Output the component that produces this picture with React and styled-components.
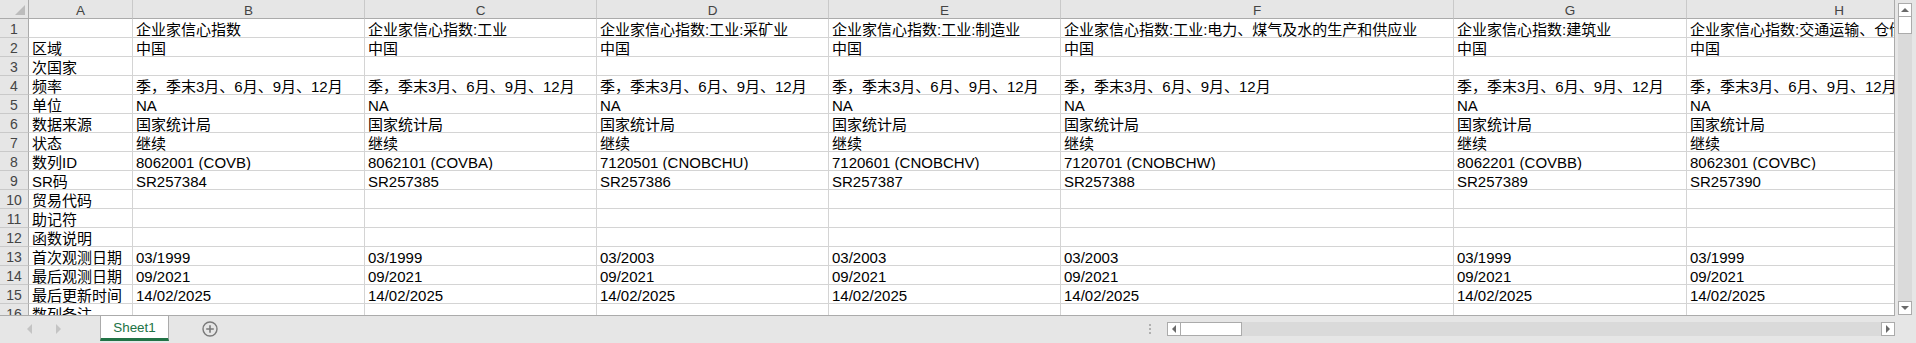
import React from "react";
import styled, { createGlobalStyle, css } from "styled-components";

const GlobalStyle = createGlobalStyle`
  body {
    margin: 0;
    overflow: hidden;
    background: #e6e6e6;
  }
`;

const columns = [
  { key: "A", w: 104 },
  { key: "B", w: 232 },
  { key: "C", w: 232 },
  { key: "D", w: 232 },
  { key: "E", w: 232 },
  { key: "F", w: 393 },
  { key: "G", w: 233 },
  { key: "H", w: 305 },
];

const all = (v) => Array(7).fill(v);

const rows = [
  [
    "",
    [
      "企业家信心指数",
      "企业家信心指数:工业",
      "企业家信心指数:工业:采矿业",
      "企业家信心指数:工业:制造业",
      "企业家信心指数:工业:电力、煤气及水的生产和供应业",
      "企业家信心指数:建筑业",
      "企业家信心指数:交通运输、仓储和邮政业",
    ],
  ],
  ["区域", all("中国")],
  ["次国家", all("")],
  ["频率", all("季，季末3月、6月、9月、12月")],
  ["单位", all("NA")],
  ["数据来源", all("国家统计局")],
  ["状态", all("继续")],
  [
    "数列ID",
    [
      "8062001 (COVB)",
      "8062101 (COVBA)",
      "7120501 (CNOBCHU)",
      "7120601 (CNOBCHV)",
      "7120701 (CNOBCHW)",
      "8062201 (COVBB)",
      "8062301 (COVBC)",
    ],
  ],
  ["SR码", ["SR257384", "SR257385", "SR257386", "SR257387", "SR257388", "SR257389", "SR257390"]],
  ["贸易代码", all("")],
  ["助记符", all("")],
  ["函数说明", all("")],
  ["首次观测日期", ["03/1999", "03/1999", "03/2003", "03/2003", "03/2003", "03/1999", "03/1999"]],
  ["最后观测日期", all("09/2021")],
  ["最后更新时间", all("14/02/2025")],
  ["数列备注", all("")],
];

function App() {
  return (
    <>
      <GlobalStyle />
      <Window>
        <Main>
          <Sheet>
            <Corner>
              <svg width="10" height="10" viewBox="0 0 10 10">
                <polygon points="10,0 10,10 0,10" fill="#bcbcbc" />
              </svg>
            </Corner>
            {columns.map((c) => (
              <ColHead key={c.key}>{c.key}</ColHead>
            ))}
            {rows.map(([label, values], i) => (
              <React.Fragment key={i}>
                <RowHead>{i + 1}</RowHead>
                <Cell>{label}</Cell>
                {values.map((v, j) => (
                  <Cell key={j}>{v}</Cell>
                ))}
              </React.Fragment>
            ))}
          </Sheet>
          <VScroll>
            <ScrollBtn>
              <Arrow $dir="up" />
            </ScrollBtn>
            <VThumb />
            <VTrack />
            <ScrollBtn>
              <Arrow $dir="down" />
            </ScrollBtn>
          </VScroll>
        </Main>
        <TabBar>
          <NavArrows>
            <NavArrow $dir="left" />
            <NavArrow $dir="right" />
          </NavArrows>
          <SheetTab>Sheet1</SheetTab>
          <AddSheet>
            <svg width="16" height="16" viewBox="0 0 16 16">
              <circle cx="8" cy="8" r="7" fill="none" stroke="#7a7a7a" strokeWidth="1.4" />
              <path d="M8 4.2v7.6M4.2 8h7.6" stroke="#7a7a7a" strokeWidth="1.6" />
            </svg>
          </AddSheet>
          <Spacer />
          <Splitter>
            <span />
            <span />
            <span />
          </Splitter>
          <HScroll>
            <ScrollBtn>
              <Arrow $dir="left" />
            </ScrollBtn>
            <HThumb />
            <HTrack />
            <ScrollBtn>
              <Arrow $dir="right" />
            </ScrollBtn>
          </HScroll>
        </TabBar>
      </Window>
    </>
  );
}

export default App;

const Window = styled.div`
  width: 1916px;
  height: 343px;
  display: flex;
  flex-direction: column;
  background: #e6e6e6;
  font-family: "Liberation Sans", "Noto Sans CJK SC", sans-serif;
  overflow: hidden;
`;

const Main = styled.div`
  display: flex;
  height: 316px;
  flex: none;
`;

const Sheet = styled.div`
  width: 1895px;
  height: 316px;
  flex: none;
  box-sizing: border-box;
  border-right: 1px solid #ababab;
  border-bottom: 1px solid #ababab;
  background: #fff;
  overflow: hidden;
  display: grid;
  grid-template-columns: 29px ${columns.map((c) => `${c.w}px`).join(" ")};
  grid-auto-rows: 19px;
  align-content: start;
`;

const cellBase = css`
  box-sizing: border-box;
  height: 19px;
  white-space: nowrap;
  overflow: hidden;
`;

const Corner = styled.div`
  ${cellBase};
  background: #e6e6e6;
  border-right: 1px solid #ababab;
  border-bottom: 1px solid #ababab;
  display: flex;
  justify-content: flex-end;
  align-items: flex-end;
  padding: 0 3px 3px 0;
`;

const ColHead = styled.div`
  ${cellBase};
  background: #e6e6e6;
  border-right: 1px solid #c9c9c9;
  border-bottom: 1px solid #ababab;
  color: #444;
  font-size: 13.5px;
  line-height: 17px;
  padding-top: 2px;
  text-align: center;
`;

const RowHead = styled.div`
  ${cellBase};
  background: #e6e6e6;
  border-right: 1px solid #ababab;
  border-bottom: 1px solid #c9c9c9;
  color: #444;
  font-size: 14px;
  line-height: 15px;
  padding-top: 3px;
  text-align: center;
`;

const Cell = styled.div`
  ${cellBase};
  border-right: 1px solid #d4d4d4;
  border-bottom: 1px solid #d4d4d4;
  color: #000;
  font-size: 15px;
  line-height: 15px;
  padding: 3px 0 0 3px;
`;

const VScroll = styled.div`
  width: 21px;
  height: 316px;
  flex: none;
  box-sizing: border-box;
  padding: 3px 4px 1px 3px;
  display: flex;
  flex-direction: column;
`;

const ScrollBtn = styled.div`
  width: 14px;
  height: 14px;
  flex: none;
  box-sizing: border-box;
  background: #fff;
  border: 1px solid #ababab;
  display: flex;
  align-items: center;
  justify-content: center;
`;

const arrowShapes = {
  up: css`
    border-left: 4px solid transparent;
    border-right: 4px solid transparent;
    border-bottom: 4px solid #6a6a6a;
  `,
  down: css`
    border-left: 4px solid transparent;
    border-right: 4px solid transparent;
    border-top: 4px solid #6a6a6a;
  `,
  left: css`
    border-top: 4px solid transparent;
    border-bottom: 4px solid transparent;
    border-right: 4px solid #6a6a6a;
  `,
  right: css`
    border-top: 4px solid transparent;
    border-bottom: 4px solid transparent;
    border-left: 4px solid #6a6a6a;
  `,
};

const Arrow = styled.span`
  width: 0;
  height: 0;
  ${(p) => arrowShapes[p.$dir]};
`;

const VThumb = styled.div`
  width: 14px;
  height: 17px;
  flex: none;
  box-sizing: border-box;
  background: #fff;
  border: 1px solid #ababab;
  border-top: none;
`;

const VTrack = styled.div`
  flex: 1;
  width: 14px;
  background: #dadada;
`;

const TabBar = styled.div`
  height: 27px;
  flex: none;
  display: flex;
  align-items: flex-start;
`;

const NavArrows = styled.div`
  width: 100px;
  height: 26px;
  flex: none;
  box-sizing: border-box;
  padding-left: 27px;
  display: flex;
  align-items: center;
  gap: 24px;
`;

const NavArrow = styled.span`
  width: 0;
  height: 0;
  border-top: 5px solid transparent;
  border-bottom: 5px solid transparent;
  ${(p) =>
    p.$dir === "left"
      ? css`border-right: 5px solid #c4c4c4;`
      : css`border-left: 5px solid #c4c4c4;`}
`;

const SheetTab = styled.div`
  width: 69px;
  height: 25px;
  flex: none;
  box-sizing: border-box;
  background: #fff;
  border-left: 1px solid #ababab;
  border-right: 1px solid #ababab;
  border-bottom: 3px solid #217346;
  color: #217346;
  font-size: 13.4px;
  line-height: 20px;
  padding-top: 2px;
  text-align: center;
`;

const AddSheet = styled.div`
  margin-left: 33px;
  height: 26px;
  display: flex;
  align-items: center;
`;

const Spacer = styled.div`
  flex: 1;
`;

const Splitter = styled.div`
  width: 3px;
  margin: 8px 15px 0 0;
  display: flex;
  flex-direction: column;
  gap: 2px;

  span {
    width: 2px;
    height: 2px;
    background: #b0b0b0;
  }
`;

const HScroll = styled.div`
  width: 728px;
  height: 14px;
  margin: 6px 21px 0 0;
  display: flex;
`;

const HThumb = styled.div`
  width: 61px;
  height: 14px;
  flex: none;
  box-sizing: border-box;
  background: #fff;
  border: 1px solid #ababab;
  border-left: none;
`;

const HTrack = styled.div`
  flex: 1;
  height: 14px;
  background: #dadada;
`;
